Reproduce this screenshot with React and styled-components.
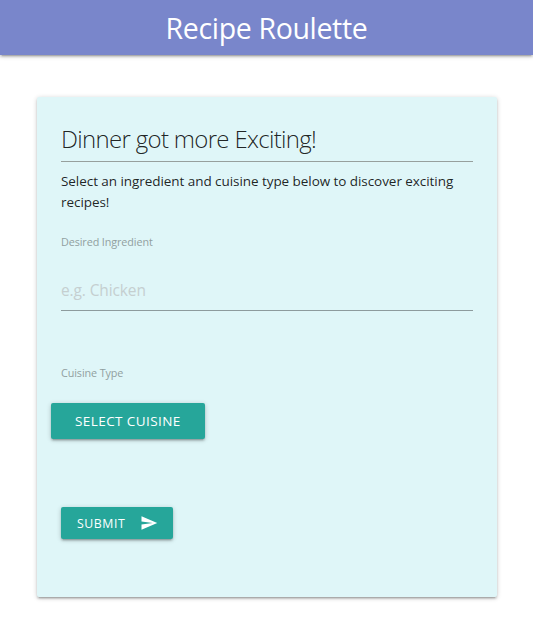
import React from "react";
import styled, { createGlobalStyle } from "styled-components";

const GlobalStyle = createGlobalStyle`
  * { box-sizing: border-box; }
  body {
    margin: 0;
    background: #fff;
    color: rgba(0, 0, 0, 0.87);
    font-family: "Open Sans", "Noto Sans", sans-serif;
  }
`;

const raised = "0 2px 2px 0 rgba(0,0,0,0.14), 0 3px 1px -2px rgba(0,0,0,0.12), 0 1px 5px 0 rgba(0,0,0,0.2)";

const Page = styled.div`
  min-height: 100vh;
`;

const Navbar = styled.nav`
  height: 55px;
  display: flex;
  justify-content: center;
  background: #7986cb;
  box-shadow: ${raised};
`;

const Brand = styled.a`
  color: #fff;
  font-size: 28.5px;
  line-height: 57px;
  letter-spacing: -0.35px;
  white-space: nowrap;
`;

const Card = styled.main`
  width: 460px;
  height: 500px;
  margin: 42px 0 0 37px;
  padding: 24px;
  border-radius: 2px;
  background: #dff6f8;
  box-shadow: ${raised};
`;

const Title = styled.h1`
  height: 41px;
  margin: 0 0 9px;
  border-bottom: 1px solid #97a09d;
  font-size: 24px;
  font-weight: 300;
  line-height: 36px;
  letter-spacing: -0.68px;
  white-space: nowrap;
`;

const Intro = styled.p`
  height: 42px;
  margin: 0;
  font-size: 13.5px;
  line-height: 21px;
  letter-spacing: -0.06px;
`;

const Label = styled.label`
  display: block;
  height: 16px;
  margin-top: ${(p) => p.$gap}px;
  color: #919fa0;
  font-size: 10.8px;
  line-height: 16px;
  letter-spacing: -0.1px;
`;

const IngredientInput = styled.input`
  display: block;
  width: 100%;
  height: 42px;
  margin-top: 19px;
  padding: 0;
  border: 0;
  border-bottom: 1px solid #8d9b9d;
  border-radius: 0;
  outline: none;
  background: transparent;
  font: 15.5px "Open Sans", "Noto Sans", sans-serif;
  letter-spacing: -0.12px;
  &::placeholder { color: #c5cfd0; opacity: 1; }
`;

const Button = styled.button`
  display: flex;
  align-items: center;
  border: 0;
  border-radius: 2px;
  background: #26a69a;
  color: #fff;
  box-shadow: ${raised};
  font-family: inherit;
  text-transform: uppercase;
  white-space: nowrap;
  cursor: pointer;
`;

const CuisineButton = styled(Button)`
  width: 154px;
  height: 36px;
  margin: 22px 0 0 -10px;
  padding: 0 0 0 24px;
  font-size: 13.5px;
  letter-spacing: 0.42px;
`;

const SubmitButton = styled(Button)`
  width: 112px;
  height: 32px;
  margin-top: 68px;
  padding: 0 15px 0 16px;
  justify-content: space-between;
  font-size: 12.3px;
  letter-spacing: 0.55px;
`;

const SendIcon = styled.svg`
  width: 18px;
  height: 18px;
  fill: currentColor;
`;

export default function App() {
  return (
    <Page>
      <GlobalStyle />
      <Navbar>
        <Brand>Recipe Roulette</Brand>
      </Navbar>
      <Card>
        <Title>Dinner got more Exciting!</Title>
        <Intro>
          Select an ingredient and cuisine type below to discover exciting recipes!
        </Intro>
        <Label $gap={21} htmlFor="ingredient">Desired Ingredient</Label>
        <IngredientInput id="ingredient" type="text" placeholder="e.g. Chicken" />
        <Label $gap={54} as="div">Cuisine Type</Label>
        <CuisineButton type="button">Select Cuisine</CuisineButton>
        <SubmitButton type="submit">
          <span>Submit</span>
          <SendIcon viewBox="0 0 24 24" aria-hidden="true">
            <path d="M2.01 21L23 12 2.01 3 2 10l15 2-15 2z" />
          </SendIcon>
        </SubmitButton>
      </Card>
    </Page>
  );
}
